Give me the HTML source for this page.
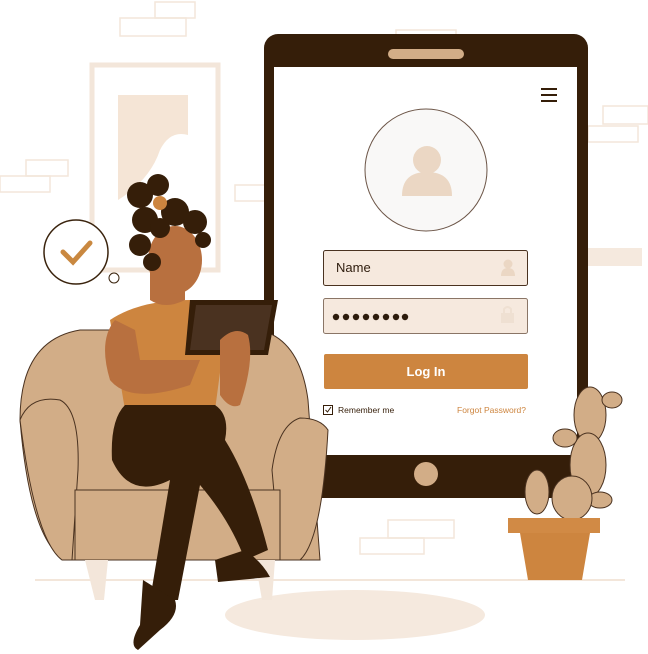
<!DOCTYPE html>
<html><head><meta charset="utf-8"><style>
html,body{margin:0;padding:0;background:#fff;width:648px;height:654px;overflow:hidden}
svg{display:block}
text{font-family:"Liberation Sans",sans-serif}
</style></head><body>
<svg width="648" height="654" viewBox="0 0 648 654" xmlns="http://www.w3.org/2000/svg">
<g fill="none" stroke="#f3e6da" stroke-width="1.5">
<rect x="120" y="18" width="66" height="18"/><rect x="155" y="2" width="40" height="16"/>
<rect x="0" y="176" width="50" height="16"/><rect x="26" y="160" width="42" height="16"/>
<rect x="235" y="185" width="30" height="16"/>
<rect x="588" y="126" width="50" height="16"/><rect x="603" y="106" width="45" height="18"/>
<rect x="360" y="538" width="64" height="16"/><rect x="388" y="520" width="66" height="18"/>
<rect x="396" y="30" width="60" height="12"/>
</g>
<rect x="586" y="248" width="56" height="18" fill="#f5e9de"/>
<rect x="92" y="65" width="126" height="205" fill="#fff" stroke="#f3e6da" stroke-width="5"/>
<rect x="118" y="95" width="70" height="150" fill="#f5e5d6"/>
<path d="M118 200 Q150 180 160 150 Q170 130 188 135 L188 245 L118 245Z" fill="#fff"/>
<circle cx="76" cy="252" r="32" fill="#fff" stroke="#3a230d" stroke-width="1.5"/>
<path d="M63 252 L73 262 L90 243" fill="none" stroke="#c98840" stroke-width="5" stroke-linecap="round"/>
<circle cx="114" cy="278" r="5" fill="none" stroke="#3a230d" stroke-width="1"/>
<line x1="35" y1="580" x2="625" y2="580" stroke="#f3e6da" stroke-width="2"/>
<ellipse cx="355" cy="615" rx="130" ry="25" fill="#f5e9de"/>
<rect x="264" y="34" width="324" height="464" rx="14" fill="#351e09"/>
<rect x="274" y="67" width="303" height="388" fill="#fff"/>
<rect x="388" y="49" width="76" height="10" rx="5" fill="#d2ad87"/>
<circle cx="426" cy="474" r="12" fill="#d2ad87"/>
<g stroke="#351e09" stroke-width="2"><line x1="541" y1="89" x2="557" y2="89"/><line x1="541" y1="95" x2="557" y2="95"/><line x1="541" y1="101" x2="557" y2="101"/></g>
<circle cx="426" cy="170" r="61" fill="#f9f8f7" stroke="#6b5446" stroke-width="1"/>
<circle cx="427" cy="160" r="14" fill="#ebd7c4"/>
<path d="M402 196 Q402 172 427 172 Q452 172 452 196Z" fill="#ebd7c4"/>
<rect x="323.5" y="250.5" width="204" height="35" rx="2" fill="#f6e9de" stroke="#4a3220"/>
<text x="336" y="272" font-size="13" fill="#2e1c0d">Name</text>
<circle cx="508" cy="264" r="4.5" fill="#ebd7c4"/><path d="M501 276 Q501 268 508 268 Q515 268 515 276Z" fill="#ebd7c4"/>
<rect x="323.5" y="298.5" width="204" height="35" rx="2" fill="#f6e9de" stroke="#8a7566"/>
<g fill="#2e1c0d"><circle cx="336" cy="317" r="3.2"/><circle cx="346" cy="317" r="3.2"/><circle cx="356" cy="317" r="3.2"/><circle cx="366" cy="317" r="3.2"/><circle cx="376" cy="317" r="3.2"/><circle cx="386" cy="317" r="3.2"/><circle cx="396" cy="317" r="3.2"/><circle cx="405" cy="317" r="3.2"/></g>
<rect x="501" y="313" width="13" height="10" fill="#efe0d2"/><path d="M504 313 V309 Q507.5 305 511 309 V313" fill="none" stroke="#efe0d2" stroke-width="2"/>
<rect x="324" y="354" width="204" height="35" rx="2" fill="#cd853f"/>
<text x="426" y="376" font-size="13" font-weight="bold" fill="#fff" text-anchor="middle">Log In</text>
<!-- cactus -->
<g fill="#d2ad87" stroke="#4a3220" stroke-width="1">
<ellipse cx="590" cy="415" rx="16" ry="28"/>
<ellipse cx="588" cy="465" rx="18" ry="32"/>
<ellipse cx="565" cy="438" rx="12" ry="9"/>
<ellipse cx="612" cy="400" rx="10" ry="8"/>
<ellipse cx="600" cy="500" rx="12" ry="8"/>
<ellipse cx="572" cy="498" rx="20" ry="22"/>
<ellipse cx="537" cy="492" rx="12" ry="22"/>
</g>
<path d="M508 518 H600 V533 H590 L582 580 H528 L520 533 H508Z" fill="#cd853f"/>
<rect x="508" y="518" width="92" height="15" fill="#d18a45"/>
<!-- chair -->
<g stroke="#4a3220" stroke-width="1" fill="#d2ad87">
<path d="M20 420 Q20 340 80 330 L260 330 Q300 340 308 400 L320 560 H65 Q30 540 20 420Z"/>
<path d="M20 420 Q30 395 60 400 Q80 410 78 470 L72 560 H62 Q35 540 20 420Z"/>
<path d="M328 430 Q320 418 300 418 Q278 425 272 470 L280 560 H300 Q322 540 328 430Z"/>
<path d="M75 490 H280 V560 H75Z"/>
</g>
<rect x="323.5" y="405.5" width="9" height="9" fill="#fff" stroke="#351e09"/>
<path d="M325.5 410 L327.5 412 L331 407" fill="none" stroke="#351e09" stroke-width="1"/>
<text x="338" y="413" font-size="8.5" fill="#351e09">Remember me</text>
<text x="526" y="413" font-size="8.5" fill="#cd853f" text-anchor="end">Forgot Password?</text>
<path d="M85 560 L95 600 H104 L108 560Z M255 560 L262 600 H272 L275 560Z" fill="#f3e6da"/>
<!-- person -->
<path d="M110 320 Q140 300 190 300 Q210 310 225 335 L215 410 H125Z" fill="#cd853f"/>
<path d="M125 405 Q110 420 112 460 Q130 500 170 480 L150 600 H178 L200 485 Q230 520 245 560 L268 550 Q250 480 225 440 Q230 415 215 405Z" fill="#351e09"/>
<path d="M143 580 L175 600 Q180 615 160 630 L138 650 Q128 645 140 625Z" fill="#351e09"/>
<path d="M215 560 L245 550 Q262 562 270 577 L218 582Z" fill="#351e09"/>
<path d="M115 320 Q98 340 110 380 Q130 405 190 385 L200 360 Q180 360 140 360 L135 330Z" fill="#b8703f"/>
<path d="M150 260 L150 300 Q165 310 185 300 L185 270Z" fill="#b8703f"/>
<ellipse cx="175" cy="260" rx="27" ry="34" fill="#b8703f"/>
<g fill="#351e09">
<circle cx="140" cy="195" r="13"/><circle cx="158" cy="185" r="11"/><circle cx="175" cy="212" r="14"/><circle cx="195" cy="222" r="12"/><circle cx="145" cy="220" r="13"/><circle cx="140" cy="245" r="11"/><circle cx="152" cy="262" r="9"/><circle cx="203" cy="240" r="8"/><circle cx="160" cy="228" r="10"/>
</g>
<circle cx="160" cy="203" r="7" fill="#cd853f"/>
<path d="M190 300 L278 300 L268 355 L185 355Z" fill="#351e09"/>
<path d="M196 305 L272 305 L264 350 L190 350Z" fill="#4a3220"/>
<path d="M220 340 Q235 325 248 335 Q255 360 240 405 Q230 410 220 395Z" fill="#b8703f"/>
</svg>
</body></html>
